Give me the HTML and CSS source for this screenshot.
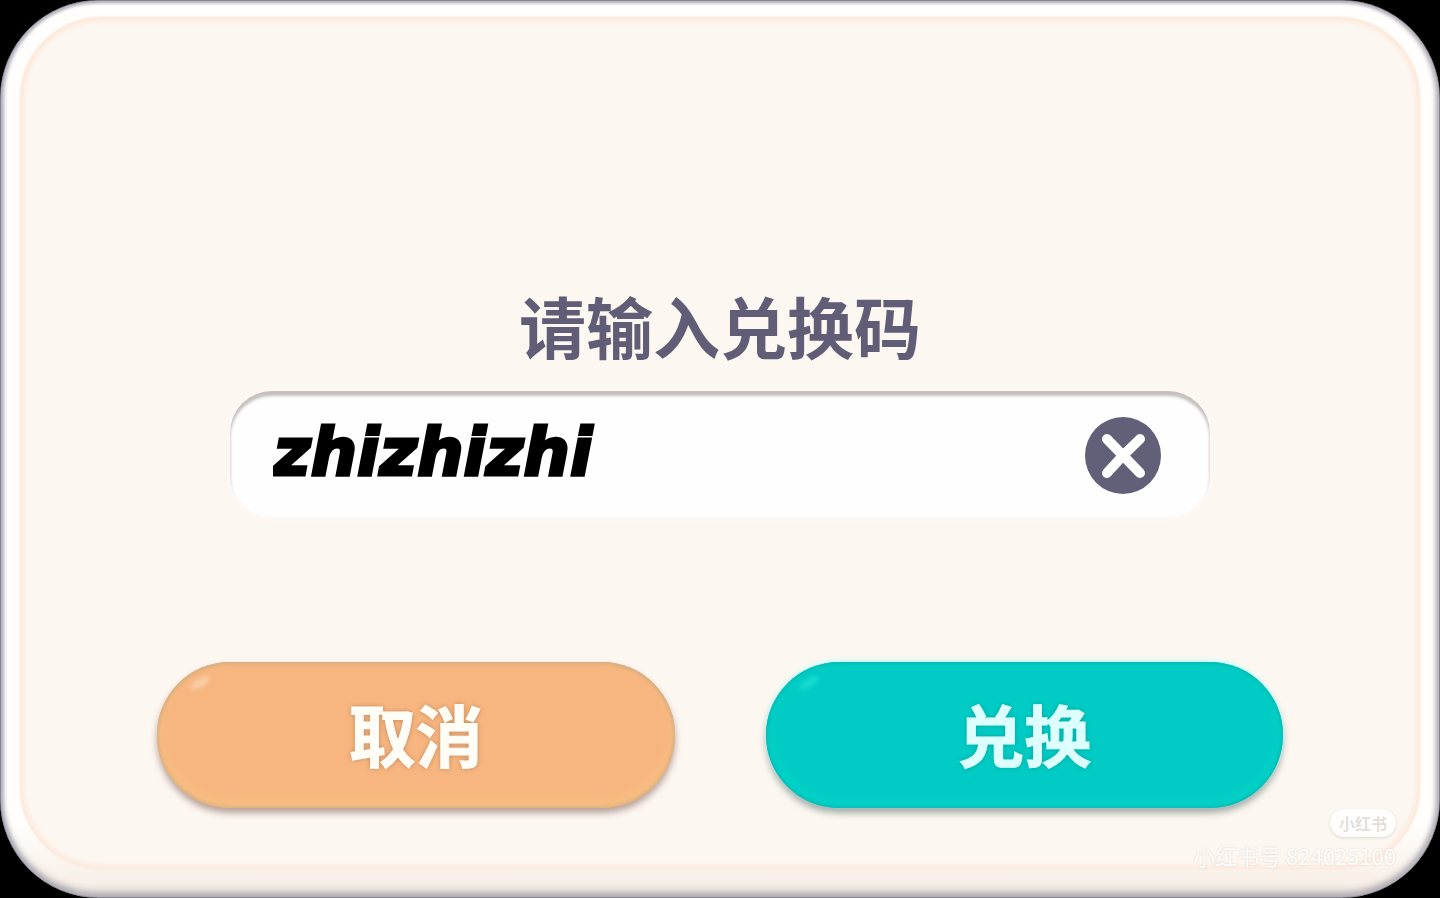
FILE: index.html
```html
<!DOCTYPE html>
<html lang="zh-CN">
<head>
<meta charset="utf-8">
<meta name="viewport" content="width=device-width, initial-scale=1">
<title>兑换码</title>
<link rel="stylesheet" href="styles.css">
</head>
<body>
<main class="dialog">
  <form class="panel">
    <label class="title" for="code">请输入兑换码</label>
    <div class="field">
      <input class="code" id="code" type="text" value="zhizhizhi" autocomplete="off" spellcheck="false">
      <button class="clear" type="button" aria-label="清除">
        <svg class="clear-icon" viewBox="0 0 76 77" aria-hidden="true">
          <ellipse cx="38" cy="38.500" rx="38" ry="38.500" fill="#625f78"/>
          <path d="M22 22 38 38.500 55 22M22 56 38 38.500 55 56" fill="none" stroke="#fff" stroke-width="10" stroke-linecap="round" stroke-linejoin="round"/>
        </svg>
      </button>
    </div>
    <div class="actions">
      <button class="action cancel" type="button">取消</button>
      <button class="action redeem" type="submit">兑换</button>
    </div>
  </form>
  <div class="watermark">
    <span class="brand">小红书</span>
    <span class="account">小红书号 824025100</span>
  </div>
</main>
</body>
</html>
```
FILE: styles.css
```css
* {
  box-sizing: border-box;
}

body {
  margin: 0;
  background: #000;
  font-family: "Noto Sans CJK SC", "Noto Sans", sans-serif;
}

.dialog {
  position: relative;
  display: flex;
  min-height: 100vh;
  padding: 16px 19px 28px;
  border: 1px solid #88858a;
  border-radius: 98px;
  background: linear-gradient(#fffefc 92%, #f8f0e8 98%, #eee8e4);
  box-shadow: inset 2px 0 4px #a9abc2, inset -3px 0 5px #b8b3bd, inset 0 -5px 7px #b5afb0, inset 0 2px 3px #c9c5c5;
}

.panel {
  flex: 1;
  display: flex;
  flex-direction: column;
  align-items: center;
  padding: 262px 0 56px;
  border-radius: 82px;
  background: #fdf7f1;
  box-shadow: 0 0 3px #fbe6d8, inset 0 0 6px 3px #fce6d7;
}

.title {
  color: #625d76;
  font-size: 67px;
  font-weight: 700;
  line-height: 92px;
}

.field {
  display: flex;
  align-items: center;
  width: 70%;
  height: 128px;
  margin-top: 20px;
  padding: 0 49px 0 36px;
  border-radius: 42px;
  background: #fffefe;
  box-shadow: inset 0 5px 3px #c6bfbe, inset 0 0 4px #f4efed, 0 0 5px #fffaf6;
}

.code {
  flex: 1;
  min-width: 0;
  padding: 0 0 4px 7px;
  border: 0;
  outline: 0;
  background: transparent;
  color: #000;
  font: italic 700 65px/80px "DejaVu Sans", sans-serif;
  -webkit-text-stroke: 3px #000;
}

.clear {
  width: 76px;
  height: 77px;
  padding: 0;
  border: 0;
  background: none;
}

.clear-icon {
  display: block;
  width: 100%;
  height: 100%;
}

.actions {
  display: grid;
  grid-template-columns: 1fr 1fr;
  gap: 91px;
  width: calc(80% + 6px);
  margin-top: 143px;
}

.action {
  position: relative;
  height: 146px;
  padding: 0 0 4px;
  border: 0;
  border-radius: 73px;
  color: #fffdf6;
  font: 700 67px/96px "Noto Sans CJK SC", sans-serif;
  -webkit-text-stroke: 1px currentColor;
}

.action::before {
  content: "";
  position: absolute;
  top: 17px;
  left: 32px;
  width: 22px;
  height: 8px;
  border-radius: 50%;
  background: currentColor;
  filter: blur(2px);
  opacity: 0.35;
  rotate: -32deg;
}

.cancel {
  background: #f7b57f;
  box-shadow: inset 0 2px 3px #d9b084, inset 0 0 4px 1px #d5ab7f, inset 0 -5px 12px 4px #f7bf82, 0 5px 7px #b5a198;
  text-shadow: 0 0 5px #b47f57;
}

.redeem {
  background: #00cbc4;
  box-shadow: inset 0 0 4px 1px #04b5ad, inset 0 -5px 12px 4px #05d3c9, 0 -2px 4px #c8fffa, 0 5px 7px #a0aaa6;
  color: #ddfffd;
  text-shadow: 0 0 5px #009d98;
}

.redeem::before {
  background: #43fff0;
}

.watermark {
  position: absolute;
  right: 43px;
  bottom: 28px;
  display: flex;
  flex-direction: column;
  align-items: flex-end;
  gap: 4px;
}

.brand {
  padding: 0 9px;
  border-radius: 15px;
  background: #fffefd;
  box-shadow: 0 1px 3px #ddd6d1;
  color: #e5dfda;
  font-size: 16px;
  font-weight: 700;
  line-height: 28px;
}

.account {
  color: #fffefc;
  font-size: 22px;
  line-height: 28px;
  text-shadow: 0 0 2px #d4ccc6;
}
```
